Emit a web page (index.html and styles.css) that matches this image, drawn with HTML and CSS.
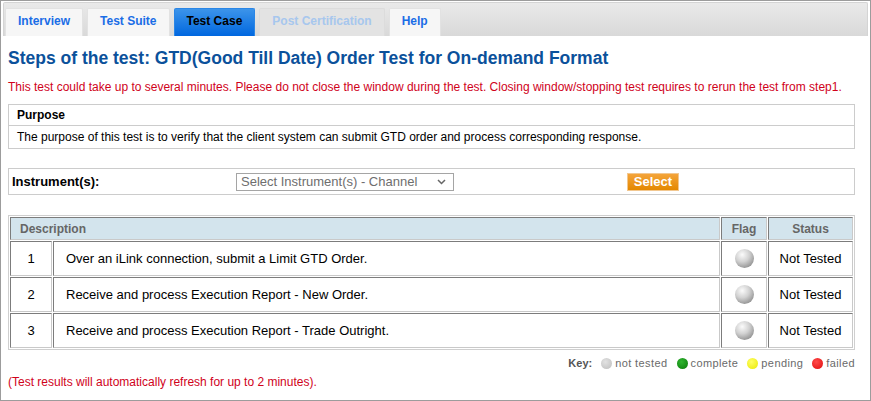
FILE: index.html
```html
<!DOCTYPE html>
<html>
<head>
<meta charset="utf-8">
<title>Test Case</title>
<link rel="stylesheet" href="styles.css">
</head>
<body>
<div class="frame">
  <nav class="tabs">
    <a class="tab">Interview</a>
    <a class="tab">Test Suite</a>
    <a class="tab active">Test Case</a>
    <a class="tab disabled">Post Certification</a>
    <a class="tab">Help</a>
  </nav>
  <div class="content">
    <h1 class="title">Steps of the test: GTD(Good Till Date) Order Test for On-demand Format</h1>
    <p class="warn">This test could take up to several minutes. Please do not close the window during the test. Closing window/stopping test requires to rerun the test from step1.</p>
    <table class="purpose">
      <tr><th class="purpose-head">Purpose</th></tr>
      <tr><td class="purpose-body">The purpose of this test is to verify that the client system can submit GTD order and process corresponding response.</td></tr>
    </table>
    <div class="instr">
      <span class="instr-label">Instrument(s):</span>
      <div class="instr-select">
        <div class="select">
          <span>Select Instrument(s) - Channel</span>
          <svg class="chev" width="9" height="6" viewBox="0 0 9 6"><path d="M1 1 L4.5 4.5 L8 1" fill="none" stroke="#666" stroke-width="1.5"/></svg>
        </div>
      </div>
      <div><button class="btn">Select</button></div>
    </div>
    <table class="steps">
      <colgroup><col class="c-num"><col><col class="c-flag"><col class="c-status"></colgroup>
      <tr><th colspan="2" class="h-desc">Description</th><th>Flag</th><th>Status</th></tr>
      <tr><td class="num">1</td><td class="desc">Over an iLink connection, submit a Limit GTD Order.</td><td class="flag"><span class="ball"></span></td><td class="status">Not Tested</td></tr>
      <tr><td class="num">2</td><td class="desc">Receive and process Execution Report - New Order.</td><td class="flag"><span class="ball"></span></td><td class="status">Not Tested</td></tr>
      <tr><td class="num">3</td><td class="desc">Receive and process Execution Report - Trade Outright.</td><td class="flag"><span class="ball"></span></td><td class="status">Not Tested</td></tr>
    </table>
    <div class="key">
      <b class="key-label">Key:</b>
      <span class="key-item"><span class="dot dot-gray"></span>not tested</span>
      <span class="key-item"><span class="dot dot-green"></span>complete</span>
      <span class="key-item"><span class="dot dot-yellow"></span>pending</span>
      <span class="key-item"><span class="dot dot-red"></span>failed</span>
    </div>
    <p class="warn note">(Test results will automatically refresh for up to 2 minutes).</p>
  </div>
</div>
</body>
</html>
```

FILE: styles.css
```css
* { box-sizing: border-box; }
html, body { margin: 0; padding: 0; background: #fff; }
body { font-family: "Liberation Sans", Arial, sans-serif; color: #000; }

.frame {
  width: 871px;
  height: 401px;
  border: 1px solid #9c9c9c;
  padding: 1px 2px 0 2px;
  overflow: hidden;
}

.tabs {
  display: flex;
  gap: 4px;
  height: 34px;
  padding: 5px 0 0 1px;
  border: 1px solid #d4d4d4;
  border-bottom: none;
  background: linear-gradient(#e9e9e9, #d9d9d9);
  border-radius: 2px 2px 0 0;
}
.tab {
  display: block;
  height: 28px;
  padding: 0 12px;
  line-height: 24px;
  font-size: 12px;
  font-weight: bold;
  color: #1a6de6;
  background: #f6f6f6;
  border: 1px solid #e2e2e2;
  border-bottom: none;
  border-radius: 2px 2px 0 0;
  white-space: nowrap;
}
.tab.active {
  color: #000;
  background: linear-gradient(#3c94ea, #0067df);
  border-color: #2a86e6;
}
.tab.disabled {
  color: #a7c7ee;
  background: #e3e3e3;
  border-color: #dcdcdc;
}

.content { padding: 0 13px 0 5px; }

.title {
  margin: 11px 0 0;
  font-size: 17.5px;
  line-height: 22px;
  font-weight: bold;
  color: #0b519b;
}

.warn {
  margin: 11px 0 0;
  font-size: 12px;
  line-height: 14px;
  color: #d0021b;
}

.purpose {
  width: 100%;
  margin-top: 10px;
  border-collapse: collapse;
  font-size: 12px;
}
.purpose-head, .purpose-body {
  border: 1px solid #cccccc;
  padding: 0 8px;
  text-align: left;
}
.purpose-head { height: 21px; font-weight: bold; }
.purpose-body { height: 23px; }

.instr {
  margin-top: 19px;
  height: 27px;
  border: 1px solid #cccccc;
  padding-left: 3px;
  display: grid;
  grid-template-columns: 224px 391px auto;
  align-items: center;
}
.instr-label { font-size: 13px; font-weight: bold; }
.select {
  width: 218px;
  height: 18px;
  border: 1px solid #a5a5a5;
  background: #fff;
  padding: 0 7px 0 4px;
  display: flex;
  justify-content: space-between;
  align-items: center;
  font-size: 13px;
  color: #6e6e6e;
}
.chev { display: block; }
.btn {
  display: block;
  width: 52px;
  height: 18px;
  padding: 0;
  border: 1px solid #f2c78f;
  background: linear-gradient(#f4a43a, #e48800);
  color: #fff;
  font-family: "Liberation Sans", Arial, sans-serif;
  font-size: 13px;
  font-weight: bold;
  line-height: 16px;
}

.steps {
  width: 100%;
  margin-top: 20px;
  border: 1px solid #cfcfcf;
  border-spacing: 1px;
  table-layout: fixed;
  font-size: 13px;
}
.c-num { width: 42px; }
.c-flag { width: 46px; }
.c-status { width: 85px; }
.steps th, .steps td {
  border: 1px solid;
  border-color: #7c7c7c #c9c9c9 #c9c9c9 #7c7c7c;
  padding: 0;
}
.steps th {
  height: 23px;
  background: #d3e4ed;
  color: #666;
  font-size: 12px;
  font-weight: bold;
  text-align: center;
}
.steps th.h-desc { text-align: left; padding-left: 9px; }
.steps td { height: 35px; }
.num { text-align: center; }
.steps td.desc { padding-left: 12px; }
.flag { text-align: center; }
.status { text-align: center; }
.ball {
  display: inline-block;
  width: 19px;
  height: 19px;
  border-radius: 50%;
  vertical-align: middle;
  background: radial-gradient(circle at 38% 30%, #fbfbfb 0%, #d2d2d2 40%, #949494 78%, #707070 100%);
}

.key {
  margin-top: 6px;
  height: 14px;
  display: flex;
  justify-content: flex-end;
  align-items: center;
  gap: 9px;
  font-size: 11px;
  color: #6a6a6a;
  letter-spacing: 0.4px;
}
.key-label { color: #555; letter-spacing: 0; }
.key-item { display: flex; align-items: center; gap: 3px; }
.dot {
  display: inline-block;
  width: 11px;
  height: 11px;
  border-radius: 50%;
}
.dot-gray { background: radial-gradient(circle at 40% 35%, #e2e2e2, #bdbdbd); }
.dot-green { background: radial-gradient(circle at 40% 35%, #2fb52f, #0a7a0a); }
.dot-yellow { background: radial-gradient(circle at 40% 35%, #ffff66, #e8e800); }
.dot-red { background: radial-gradient(circle at 40% 35%, #ff4a4a, #e00c0c); }

.note { margin-top: 5px; }
```
